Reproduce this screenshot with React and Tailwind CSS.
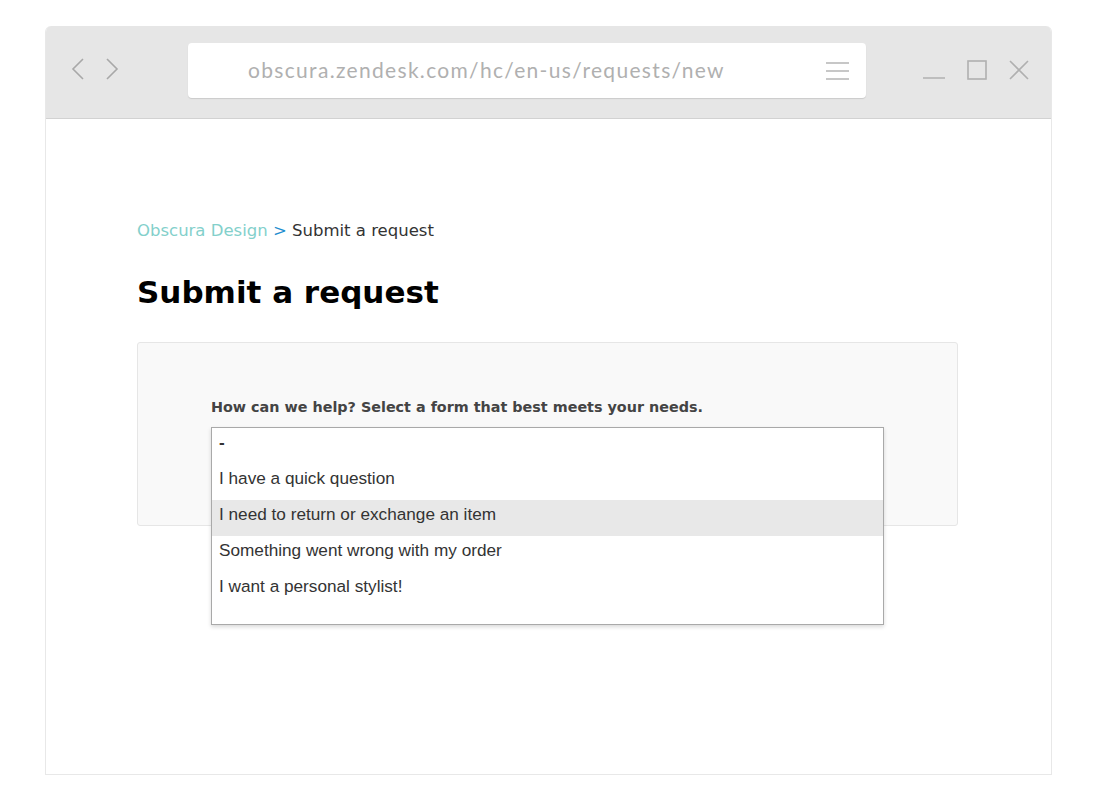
import React from "react";

export default function App() {
  const options = [
    { label: "-", bold: true },
    { label: "I have a quick question" },
    { label: "I need to return or exchange an item", active: true },
    { label: "Something went wrong with my order" },
    { label: "I want a personal stylist!" },
  ];
  return (
    <div className="w-[1100px] h-[800px] bg-white pt-[26px] pl-[45px]">
      <div className="w-[1007px] h-[749px] flex flex-col rounded-t-[6px] overflow-hidden border-x border-b border-[#e8e8e8]">
        {/* top bar */}
        <div className="h-[93px] bg-[#e6e6e6] border-b border-[#d2d2d2] flex items-start pt-[17px] shrink-0 -mx-px">
          <div className="w-[143px] h-[55px] flex items-center pl-[26px] gap-[20px] pb-[4px] text-[#a8a8a8]">
            <svg width="14" height="22" viewBox="0 0 14 22" fill="none" stroke="currentColor" strokeWidth="1.6">
              <path d="M12 1 L2 11 L12 21" />
            </svg>
            <svg width="14" height="22" viewBox="0 0 14 22" fill="none" stroke="currentColor" strokeWidth="1.6">
              <path d="M2 1 L12 11 L2 21" />
            </svg>
          </div>
          <div className="w-[678px] h-[55px] bg-white rounded-[4px] shadow-[0_1px_1px_rgba(0,0,0,0.12)] flex items-center relative pb-[2px]">
            <span className="pl-[60px] text-[21px] text-[#b0b0b0] font-['Lato',sans-serif] tracking-[1.32px]">
              obscura.zendesk.com/hc/en-us/requests/new
            </span>
            <svg className="absolute right-[17px] top-[18px]" width="23" height="20" viewBox="0 0 23 20" stroke="#b5b5b5" strokeWidth="1.6">
              <path d="M0 2 H23 M0 10 H23 M0 18 H23" />
            </svg>
          </div>
          <div className="h-[55px] flex items-center pl-[57px] gap-[22px] pb-[2px] text-[#b0b0b0]">
            <svg width="22" height="22" viewBox="0 0 22 22" stroke="currentColor" strokeWidth="1.6">
              <path d="M0 19 H22" />
            </svg>
            <svg width="20" height="20" viewBox="0 0 20 20" fill="none" stroke="currentColor" strokeWidth="1.6">
              <rect x="1" y="1" width="18" height="18" />
            </svg>
            <svg width="20" height="20" viewBox="0 0 20 20" fill="none" stroke="currentColor" strokeWidth="1.6">
              <path d="M1 1 L19 19 M19 1 L1 19" />
            </svg>
          </div>
        </div>
        {/* content */}
        <div className="flex-1 bg-white pl-[91px] pt-[100px] font-['DejaVu_Sans',sans-serif]">
          <div className="text-[16.5px] leading-[24px]">
            <span className="text-[#83d0cb]">Obscura Design</span>
            <span className="text-[#1f8ecf]"> &gt; </span>
            <span className="text-[#333]">Submit a request</span>
          </div>
          <h1 className="mt-[29px] text-[31px] font-bold text-black leading-[40px]">Submit a request</h1>
          <div className="mt-[30px] w-[821px] h-[184px] bg-[#f9f9f9] border border-[#e6e6e6] rounded-[3px] pl-[73px] pt-[54px] relative">
            <div className="text-[14.35px] font-bold text-[#444] leading-[20px]">
              How can we help? Select a form that best meets your needs.
            </div>
            <div className="absolute left-[73px] top-[84px] w-[673px] h-[198px] bg-white border border-[#a9a9a9] shadow-[0_2px_4px_rgba(0,0,0,0.15)] font-['Liberation_Sans',sans-serif] text-[17.2px] text-[#333] pb-[17px]">
              {options.map((o, i) => (
                <div
                  key={i}
                  className={`h-[36px] flex items-center pl-[7px] ${o.active ? "bg-[#e8e8e8]" : ""} ${o.bold ? "font-bold pb-[7px]" : "pb-[7px]"}`}
                >
                  {o.label}
                </div>
              ))}
            </div>
          </div>
        </div>
      </div>
    </div>
  );
}
